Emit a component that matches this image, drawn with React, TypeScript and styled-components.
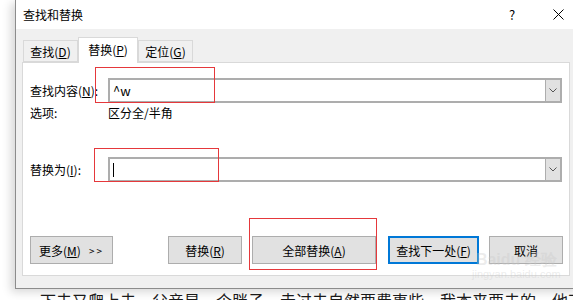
import React from "react";
import styled, { createGlobalStyle } from "styled-components";

const GlobalStyle = createGlobalStyle`
  html, body {
    margin: 0;
    padding: 0;
    background: #fff;
  }
  body {
    font-family: "Noto Sans CJK SC", "Noto Sans", sans-serif;
    color: #000;
  }
`;

const Page = styled.div`
  position: relative;
  width: 573px;
  height: 300px;
  overflow: hidden;
  background: #fff;
`;

const Window = styled.div`
  margin-left: 15px;
  width: 566px;
  height: 289px;
  box-sizing: border-box;
  border-left: 1px solid #8c8c8c;
  border-bottom: 1px solid #8c8c8c;
  background: #f0f0f0;
  box-shadow: -4px 3px 9px rgba(0, 0, 0, 0.16);
  display: flex;
  flex-direction: column;
`;

const TitleBar = styled.div`
  height: 29px;
  background: #fff;
  display: flex;
  align-items: center;
  padding-left: 7px;
  font-size: 12px;
`;

const Title = styled.span`
  flex: 1;
`;

const Caption = styled.span`
  width: 46px;
  display: flex;
  align-items: center;
  justify-content: center;
  font-size: 13px;
`;

const Body = styled.div`
  padding: 8px 0 0 6px;
`;

const TabStrip = styled.div`
  display: flex;
  align-items: flex-end;
  height: 25px;
  padding-left: 1px;
`;

const Tab = styled.div<{ $active?: boolean; $w: number }>`
  width: ${(p) => p.$w}px;
  height: ${(p) => (p.$active ? 26 : 22)}px;
  box-sizing: border-box;
  border: 1px solid #d9d9d9;
  border-bottom: ${(p) => (p.$active ? "none" : "1px solid #d9d9d9")};
  background: ${(p) => (p.$active ? "#fff" : "#f0f0f0")};
  margin-bottom: ${(p) => (p.$active ? -1 : 0)}px;
  position: relative;
  z-index: ${(p) => (p.$active ? 1 : 0)};
  display: flex;
  align-items: center;
  justify-content: center;
  font-size: 12px;
  padding-bottom: ${(p) => (p.$active ? 2 : 0)}px;
`;

const Panel = styled.div`
  width: 548px;
  height: 214px;
  box-sizing: border-box;
  border: 1px solid #d9d9d9;
  background: #fff;
  padding: 15px 6px 0 7px;
  display: flex;
  flex-direction: column;
  font-size: 12px;
`;

const Row = styled.div<{ $mt?: number }>`
  display: flex;
  align-items: center;
  margin-top: ${(p) => p.$mt ?? 0}px;
`;

const Label = styled.span`
  width: 78px;
  flex: none;
`;

const Combo = styled.div`
  width: 454px;
  height: 25px;
  box-sizing: border-box;
  border: 2px solid #adadad;
  background: #fff;
  display: flex;
  align-items: center;
`;

const ComboText = styled.span`
  flex: 1;
  padding-left: 3px;
  font-size: 13px;
  display: flex;
  align-items: center;
`;

const Caret = styled.span`
  width: 1px;
  height: 14px;
  background: #000;
`;

const DropButton = styled.span`
  width: 15px;
  height: 21px;
  box-sizing: border-box;
  border-left: 1px solid #adadad;
  background: #e1e1e1;
  display: flex;
  align-items: center;
  justify-content: center;
`;

const OptionRow = styled.div`
  display: flex;
  height: 16px;
  line-height: 16px;
  margin-top: 2px;
`;

const ButtonRow = styled.div`
  display: flex;
  align-items: center;
  margin-top: 54px;
  height: 28px;
`;

const Spacer = styled.span`
  flex: 1;
`;

const ButtonGroup = styled.div`
  display: flex;
  gap: 10px;
`;

const Button = styled.div<{ $w: number; $default?: boolean }>`
  width: ${(p) => p.$w}px;
  height: 28px;
  box-sizing: border-box;
  border: ${(p) => (p.$default ? "2px solid #0078d7" : "1px solid #adadad")};
  background: #e1e1e1;
  display: flex;
  align-items: center;
  justify-content: center;
  font-size: 12px;
  margin-left: ${(p) => (p.$default ? 2 : 0)}px;
`;

const Arrows = styled.span`
  margin-left: 8px;
  letter-spacing: 2px;
  font-size: 10px;
`;

const Mark = styled.div`
  position: absolute;
  border: 1px solid #e5383b;
  box-sizing: border-box;
`;

const PageText = styled.p`
  margin: 1px 0 0 40px;
  font-size: 16px;
  line-height: 20px;
  white-space: nowrap;
  color: #1a1a1a;
`;

const Watermark = styled.div`
  position: absolute;
  left: 472px;
  top: 252px;
  display: flex;
  flex-direction: column;
  align-items: center;
  color: rgba(200, 200, 200, 0.35);
  font-family: "Liberation Sans", sans-serif;
  pointer-events: none;
`;

const WaterBig = styled.span`
  font-size: 16px;
  font-weight: bold;
  line-height: 16px;
`;

const WaterSmall = styled.span`
  font-size: 11px;
  line-height: 13px;
`;

const Chevron = () => (
  <svg width="8" height="5" viewBox="0 0 8 5">
    <path d="M0.5 0.5 L4 4 L7.5 0.5" fill="none" stroke="#555" strokeWidth="1" />
  </svg>
);

export default function App() {
  return (
    <>
      <GlobalStyle />
      <Page>
        <Window>
          <TitleBar>
            <Title>查找和替换</Title>
            <Caption>?</Caption>
            <Caption>
              <svg width="11" height="11" viewBox="0 0 11 11">
                <path d="M0.5 0.5 L10.5 10.5 M10.5 0.5 L0.5 10.5" stroke="#000" strokeWidth="1" />
              </svg>
            </Caption>
          </TitleBar>
          <Body>
            <TabStrip>
              <Tab $w={55}>
                查找(<u>D</u>)
              </Tab>
              <Tab $w={60} $active>
                替换(<u>P</u>)
              </Tab>
              <Tab $w={55}>
                定位(<u>G</u>)
              </Tab>
            </TabStrip>
            <Panel>
              <Row>
                <Label>
                  查找内容(<u>N</u>):
                </Label>
                <Combo>
                  <ComboText>^w</ComboText>
                  <DropButton>
                    <Chevron />
                  </DropButton>
                </Combo>
              </Row>
              <OptionRow>
                <Label>选项:</Label>
                <span>区分全/半角</span>
              </OptionRow>
              <Row $mt={36}>
                <Label>
                  替换为(<u>I</u>):
                </Label>
                <Combo>
                  <ComboText>
                    <Caret />
                  </ComboText>
                  <DropButton>
                    <Chevron />
                  </DropButton>
                </Combo>
              </Row>
              <ButtonRow>
                <Button $w={83}>
                  更多(<u>M</u>)<Arrows>&gt;&gt;</Arrows>
                </Button>
                <Spacer />
                <ButtonGroup>
                  <Button $w={74}>
                    替换(<u>R</u>)
                  </Button>
                  <Button $w={124}>
                    全部替换(<u>A</u>)
                  </Button>
                  <Button $w={91} $default>
                    查找下一处(<u>F</u>)
                  </Button>
                  <Button $w={74}>取消</Button>
                </ButtonGroup>
              </ButtonRow>
            </Panel>
          </Body>
        </Window>
        <PageText>下去又爬上去。父亲是一个胖子，走过去自然要费事些。我本来要去的，他不</PageText>
        <Mark style={{ left: 95, top: 67, width: 120, height: 36 }} />
        <Mark style={{ left: 94, top: 148, width: 125, height: 34 }} />
        <Mark style={{ left: 249, top: 218, width: 128, height: 52 }} />
        <Watermark>
          <WaterBig>Baidu 经验</WaterBig>
          <WaterSmall>jingyan.baidu.com</WaterSmall>
        </Watermark>
      </Page>
    </>
  );
}
